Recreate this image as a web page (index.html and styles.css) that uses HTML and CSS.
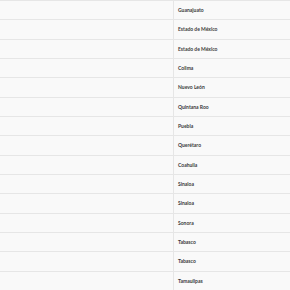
FILE: index.html
```html
<!DOCTYPE html>
<html>
<head>
<meta charset="utf-8">
<link rel="stylesheet" href="styles.css">
</head>
<body>
<table class="grid">
<tbody>
<tr><td class="c1"></td><td class="c2">Guanajuato</td></tr>
<tr><td class="c1"></td><td class="c2">Estado de México</td></tr>
<tr><td class="c1"></td><td class="c2">Estado de México</td></tr>
<tr><td class="c1"></td><td class="c2">Colima</td></tr>
<tr><td class="c1"></td><td class="c2">Nuevo León</td></tr>
<tr><td class="c1"></td><td class="c2">Quintana Roo</td></tr>
<tr><td class="c1"></td><td class="c2">Puebla</td></tr>
<tr><td class="c1"></td><td class="c2">Querétaro</td></tr>
<tr><td class="c1"></td><td class="c2">Coahuila</td></tr>
<tr><td class="c1"></td><td class="c2">Sinaloa</td></tr>
<tr><td class="c1"></td><td class="c2">Sinaloa</td></tr>
<tr><td class="c1"></td><td class="c2">Sonora</td></tr>
<tr><td class="c1"></td><td class="c2">Tabasco</td></tr>
<tr><td class="c1"></td><td class="c2">Tabasco</td></tr>
<tr><td class="c1"></td><td class="c2">Tamaulipas</td></tr>
</tbody>
</table>
</body>
</html>
```
FILE: styles.css
```css
html, body {
  margin: 0;
  padding: 0;
  background: #ffffff;
}
body {
  font-family: Lato, "Open Sans", sans-serif;
  overflow: hidden;
}
.grid {
  width: 100%;
  border-collapse: collapse;
  table-layout: fixed;
}
.grid tr {
  height: 19.34px;
}
.grid td {
  border-top: 1px solid #e6e6e6;
  padding: 0 0 0 4.5px;
  font-size: 5px;
  font-weight: 700;
  color: #3a3a3a;
  background: #f9f9f9;
  vertical-align: middle;
}
.grid .c1 {
  width: 168px;
  border-right: 1px solid #e6e6e6;
}
```
